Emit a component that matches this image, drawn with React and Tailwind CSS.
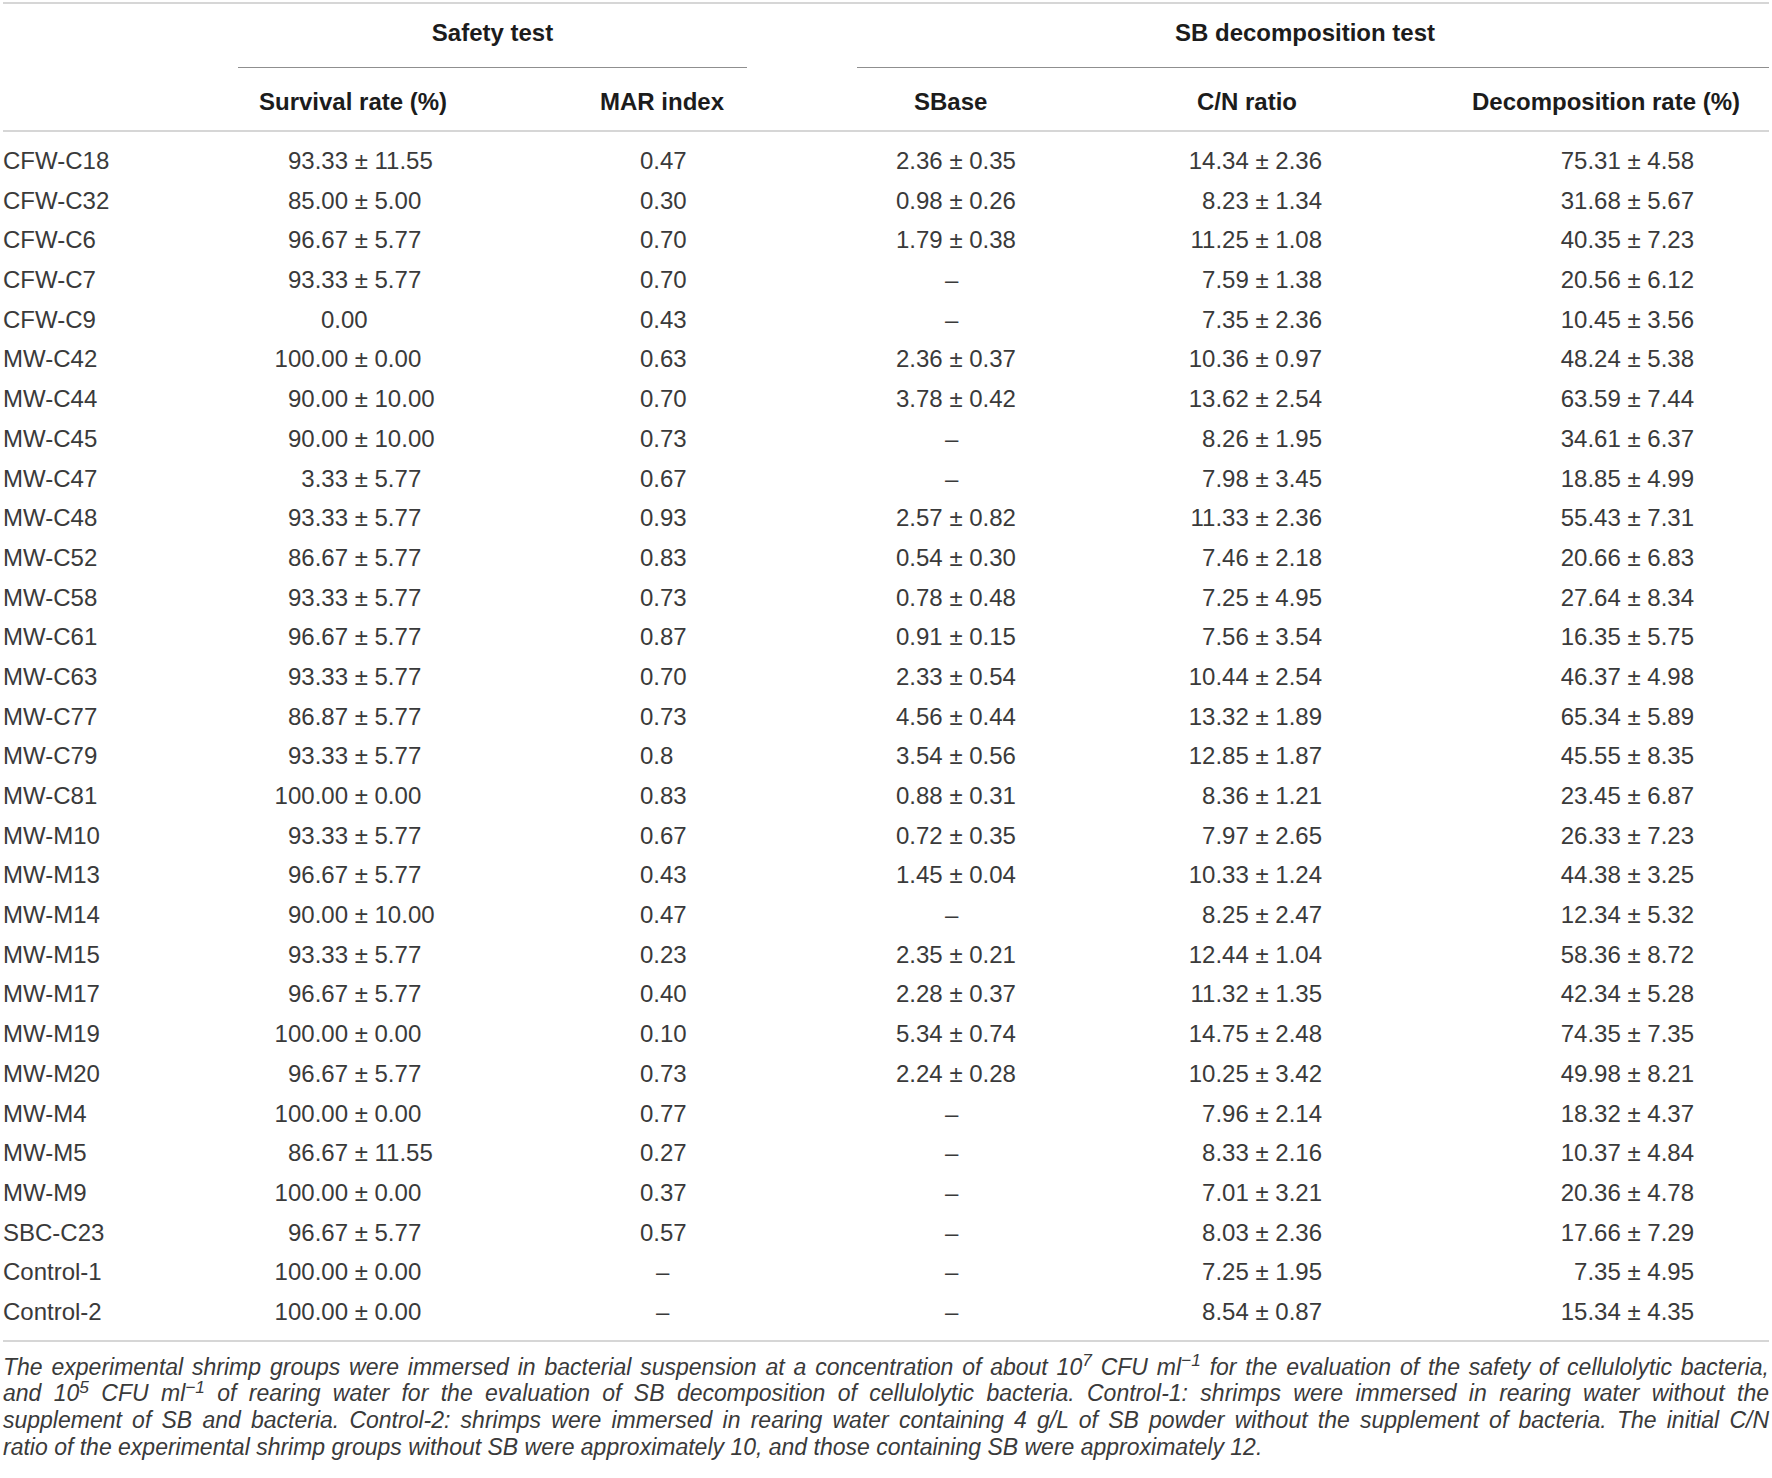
const rows = [
  ['CFW-C18', '93.33', '11.55', '0.47', '2.36 ± 0.35', '14.34 ± 2.36', '75.31 ± 4.58'],
  ['CFW-C32', '85.00', '5.00', '0.30', '0.98 ± 0.26', '8.23 ± 1.34', '31.68 ± 5.67'],
  ['CFW-C6', '96.67', '5.77', '0.70', '1.79 ± 0.38', '11.25 ± 1.08', '40.35 ± 7.23'],
  ['CFW-C7', '93.33', '5.77', '0.70', null, '7.59 ± 1.38', '20.56 ± 6.12'],
  ['CFW-C9', '0.00', null, '0.43', null, '7.35 ± 2.36', '10.45 ± 3.56'],
  ['MW-C42', '100.00', '0.00', '0.63', '2.36 ± 0.37', '10.36 ± 0.97', '48.24 ± 5.38'],
  ['MW-C44', '90.00', '10.00', '0.70', '3.78 ± 0.42', '13.62 ± 2.54', '63.59 ± 7.44'],
  ['MW-C45', '90.00', '10.00', '0.73', null, '8.26 ± 1.95', '34.61 ± 6.37'],
  ['MW-C47', '3.33', '5.77', '0.67', null, '7.98 ± 3.45', '18.85 ± 4.99'],
  ['MW-C48', '93.33', '5.77', '0.93', '2.57 ± 0.82', '11.33 ± 2.36', '55.43 ± 7.31'],
  ['MW-C52', '86.67', '5.77', '0.83', '0.54 ± 0.30', '7.46 ± 2.18', '20.66 ± 6.83'],
  ['MW-C58', '93.33', '5.77', '0.73', '0.78 ± 0.48', '7.25 ± 4.95', '27.64 ± 8.34'],
  ['MW-C61', '96.67', '5.77', '0.87', '0.91 ± 0.15', '7.56 ± 3.54', '16.35 ± 5.75'],
  ['MW-C63', '93.33', '5.77', '0.70', '2.33 ± 0.54', '10.44 ± 2.54', '46.37 ± 4.98'],
  ['MW-C77', '86.87', '5.77', '0.73', '4.56 ± 0.44', '13.32 ± 1.89', '65.34 ± 5.89'],
  ['MW-C79', '93.33', '5.77', '0.8', '3.54 ± 0.56', '12.85 ± 1.87', '45.55 ± 8.35'],
  ['MW-C81', '100.00', '0.00', '0.83', '0.88 ± 0.31', '8.36 ± 1.21', '23.45 ± 6.87'],
  ['MW-M10', '93.33', '5.77', '0.67', '0.72 ± 0.35', '7.97 ± 2.65', '26.33 ± 7.23'],
  ['MW-M13', '96.67', '5.77', '0.43', '1.45 ± 0.04', '10.33 ± 1.24', '44.38 ± 3.25'],
  ['MW-M14', '90.00', '10.00', '0.47', null, '8.25 ± 2.47', '12.34 ± 5.32'],
  ['MW-M15', '93.33', '5.77', '0.23', '2.35 ± 0.21', '12.44 ± 1.04', '58.36 ± 8.72'],
  ['MW-M17', '96.67', '5.77', '0.40', '2.28 ± 0.37', '11.32 ± 1.35', '42.34 ± 5.28'],
  ['MW-M19', '100.00', '0.00', '0.10', '5.34 ± 0.74', '14.75 ± 2.48', '74.35 ± 7.35'],
  ['MW-M20', '96.67', '5.77', '0.73', '2.24 ± 0.28', '10.25 ± 3.42', '49.98 ± 8.21'],
  ['MW-M4', '100.00', '0.00', '0.77', null, '7.96 ± 2.14', '18.32 ± 4.37'],
  ['MW-M5', '86.67', '11.55', '0.27', null, '8.33 ± 2.16', '10.37 ± 4.84'],
  ['MW-M9', '100.00', '0.00', '0.37', null, '7.01 ± 3.21', '20.36 ± 4.78'],
  ['SBC-C23', '96.67', '5.77', '0.57', null, '8.03 ± 2.36', '17.66 ± 7.29'],
  ['Control-1', '100.00', '0.00', null, null, '7.25 ± 1.95', '7.35 ± 4.95'],
  ['Control-2', '100.00', '0.00', null, null, '8.54 ± 0.87', '15.34 ± 4.35'],
];

// label | survival | MAR | gap | SBase | C/N | decomposition
const cols = 'grid grid-cols-[235px_342px_167px_110px_273px_290px_349px]';

export default function App() {
  return (
    <div className="w-[1772px] min-h-[1478px] bg-white px-[3px] pt-[2px] font-['Liberation_Sans',Arial,sans-serif] text-[24px] text-[#3a3a3a]">
      <div className="border-t-2 border-[#d6d6d6]">
        {/* group headers */}
        <div className="flex font-bold text-[#1c1c1c] leading-[27px]">
          <div className="w-[235px]" />
          <div className="w-[509px] border-b border-[#8f8f8f] pt-[15px] pb-[21px] text-center">Safety test</div>
          <div className="w-[110px]" />
          <div className="flex-1 border-b border-[#8f8f8f] pt-[15px] pb-[21px] pr-[16px] text-center">SB decomposition test</div>
        </div>

        {/* column headers */}
        <div className={`${cols} border-b-2 border-[#d6d6d6] pt-[20px] pb-[15px] font-bold text-[#1c1c1c] leading-[27px]`}>
          <div />
          <div className="pl-[21px]">Survival rate (%)</div>
          <div className="pl-[20px]">MAR index</div>
          <div />
          <div className="pl-[57px]">SBase</div>
          <div className="pl-[67px]">C/N ratio</div>
          <div className="pl-[52px] whitespace-nowrap">Decomposition rate (%)</div>
        </div>

        {/* body */}
        <div className="border-b-2 border-[#d6d6d6] pt-[9px] pb-[8px]">
          {rows.map((r) => (
            <div key={r[0]} className={`${cols} h-[39.7px] leading-[39.7px] whitespace-nowrap`}>
              <div>{r[0]}</div>
              <div className="flex">
                {r[2] ? (
                  <>
                    <span className="w-[110px] text-right">{r[1]}</span>
                    <span>&nbsp;±&nbsp;{r[2]}</span>
                  </>
                ) : (
                  <span className="pl-[83px]">{r[1]}</span>
                )}
              </div>
              <div className={r[3] ? 'pl-[60px]' : 'pl-[76px]'}>{r[3] ?? '–'}</div>
              <div />
              <div className={r[4] ? 'pl-[39px]' : 'pl-[88px]'}>{r[4] ?? '–'}</div>
              <div className="pr-[98px] text-right">{r[5]}</div>
              <div className="pr-[75px] text-right">{r[6]}</div>
            </div>
          ))}
        </div>

        {/* footnote */}
        <div className="pt-[12px] text-[23px] leading-[26.75px] italic text-[#3a3a3a]">
          <div className="whitespace-nowrap text-justify [text-align-last:justify]">
            The experimental shrimp groups were immersed in bacterial suspension at a concentration of about 10<sup>7</sup> CFU ml<sup>−1</sup> for the evaluation of the safety of cellulolytic bacteria,
          </div>
          <div className="whitespace-nowrap text-justify [text-align-last:justify]">
            and 10<sup>5</sup> CFU ml<sup>−1</sup> of rearing water for the evaluation of SB decomposition of cellulolytic bacteria. Control-1: shrimps were immersed in rearing water without the
          </div>
          <div className="whitespace-nowrap text-justify [text-align-last:justify]">
            supplement of SB and bacteria. Control-2: shrimps were immersed in rearing water containing 4 g/L of SB powder without the supplement of bacteria. The initial C/N
          </div>
          <div className="whitespace-nowrap">
            ratio of the experimental shrimp groups without SB were approximately 10, and those containing SB were approximately 12.
          </div>
        </div>
      </div>
    </div>
  );
}
